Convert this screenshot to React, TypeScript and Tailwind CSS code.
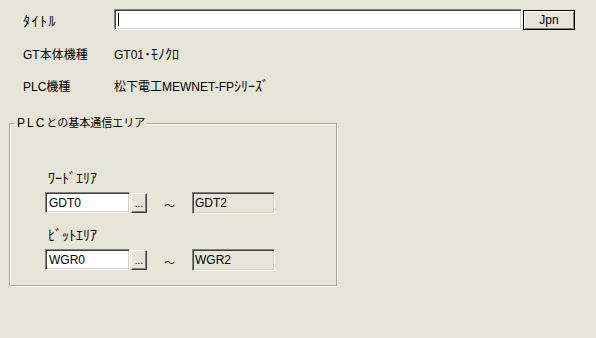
import React from "react";

const sunken =
  "border border-t-[#808080] border-l-[#808080] border-r-white border-b-white shadow-[inset_1px_1px_0_#404040,inset_-1px_-1px_0_#d4d0c8]";
const raised =
  "border border-t-white border-l-white border-r-[#404040] border-b-[#404040] shadow-[inset_-1px_-1px_0_#808080]";

function Kana({ children, className = "" }: { children: React.ReactNode; className?: string }) {
  return <span className={`text-[14px] leading-[12px] ${className}`}>{children}</span>;
}

function AreaRow({ from, to }: { from: string; to: string }) {
  return (
    <div className="flex items-center h-[21px]">
      <div className={`w-[85px] h-[21px] bg-white ${sunken} flex items-center pl-[3px]`}>{from}</div>
      <div className={`ml-[1px] w-[16px] h-[20px] bg-[#e6e5d8] ${raised} flex items-end justify-center pb-[3px] text-[10px] leading-[10px]`}>
        ...
      </div>
      <div className="w-[45px] flex justify-center pt-[6px] text-[11px]">～</div>
      <div className={`w-[83px] h-[22px] bg-[#e6e5d8] ${sunken} flex items-center pl-[2px]`}>{to}</div>
    </div>
  );
}

export default function App() {
  return (
    <div
      className="w-[596px] h-[338px] bg-[#e6e5d8] text-black text-[12px] leading-[14px] pt-[9px] pl-[9px] overflow-hidden"
      style={{ fontFamily: '"Liberation Sans","Noto Sans CJK JP",sans-serif' }}
    >
      <div className="pl-[14px] flex items-center h-[21px]">
        <div className="w-[91px] h-[14px] mt-[4px]">
          <Kana className="tracking-[1.5px]">ﾀｲﾄﾙ</Kana>
        </div>
        <div className={`w-[408px] h-[21px] bg-white ${sunken} relative`}>
          <span className="absolute left-[3px] top-[3px] w-[1px] h-[13px] bg-black" />
        </div>
        <div className="ml-[1px] w-[52px] h-[20px] border border-black bg-[#e6e5d8] shadow-[inset_1px_1px_0_white,inset_-1px_-1px_0_#808080] flex items-center justify-center">
          Jpn
        </div>
      </div>
      <div className="pl-[14px] flex h-[14px] mt-[18px]">
        <div className="w-[91px]">GT本体機種</div>
        <div>
          GT01<Kana>･ﾓﾉｸﾛ</Kana>
        </div>
      </div>
      <div className="pl-[14px] flex h-[14px] mt-[18px]">
        <div className="w-[91px]">PLC機種</div>
        <div>
          松下電工MEWNET-FP<Kana>ｼﾘｰｽﾞ</Kana>
        </div>
      </div>
      <fieldset className="mt-[22px] w-[328px] border border-[#a5a497] shadow-[inset_1px_1px_0_white,1px_1px_0_white] pb-[15px]">
        <legend className="ml-[5px] px-[2px] bg-[#e6e5d8] text-[11px] leading-[14px]">
          <span className="tracking-[2px] text-[12px]">PLC</span>との基本通信エリア
        </legend>
        <div className="pl-[35px]">
          <div className="mt-[42px] pl-[3px] h-[14px]">
            <Kana>ﾜｰﾄﾞｴﾘｱ</Kana>
          </div>
          <div className="mt-[6px]">
            <AreaRow from="GDT0" to="GDT2" />
          </div>
          <div className="mt-[16px] pl-[3px] h-[14px]">
            <Kana>ﾋﾞｯﾄｴﾘｱ</Kana>
          </div>
          <div className="mt-[6px]">
            <AreaRow from="WGR0" to="WGR2" />
          </div>
        </div>
      </fieldset>
    </div>
  );
}
